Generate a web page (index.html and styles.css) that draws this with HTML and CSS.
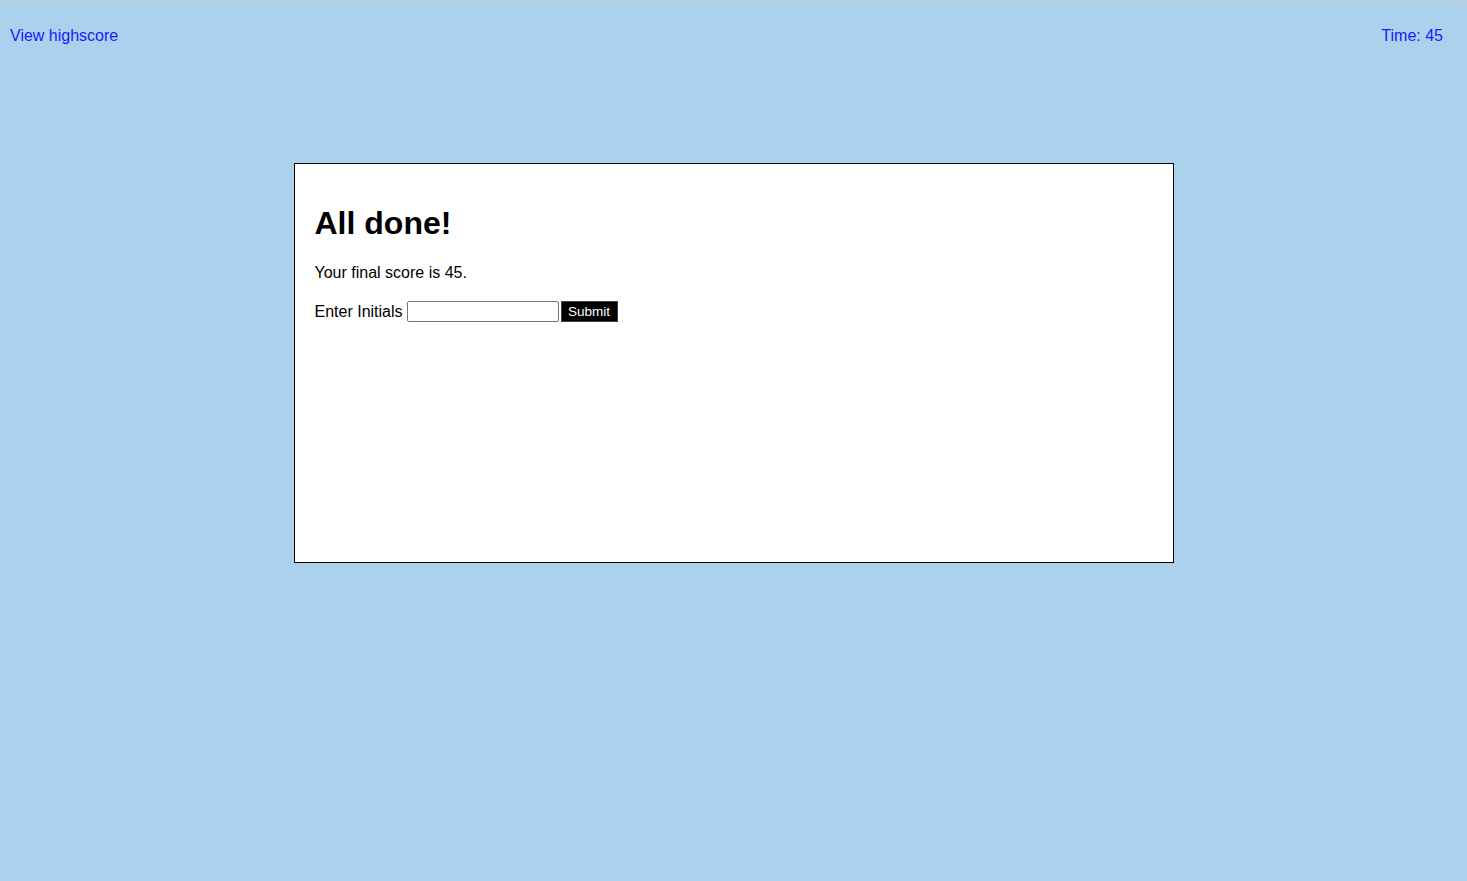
FILE: index.html
```html
<!DOCTYPE html>
<html>
<head>
<meta charset="utf-8">
<link rel="stylesheet" href="styles.css">
</head>
<body>
<header class="topbar">
  <a class="highscore" href="#">View highscore</a>
  <span class="timer">Time: 45</span>
</header>
<main class="card">
  <h1 class="title">All done!</h1>
  <p class="score">Your final score is 45.</p>
  <form class="initials">
    <label class="label" for="init">Enter Initials</label>
    <input class="input" id="init" type="text">
    <button class="submit" type="button">Submit</button>
  </form>
</main>
</body>
</html>
```
FILE: styles.css
```css
html, body {
  margin: 0;
  height: 100%;
}
body {
  background: #abd1ec;
  border-top: 1px solid #c9c9c9;
  box-sizing: border-box;
  font-family: "Liberation Sans", Arial, sans-serif;
  font-size: 16px;
  color: #000;
}
.topbar {
  display: flex;
  justify-content: space-between;
  padding: 26px 24px 0 10px;
  line-height: 18px;
  color: #1a1aff;
}
.highscore {
  color: #1a1aff;
  text-decoration: none;
}
.card {
  width: 880px;
  height: 400px;
  box-sizing: border-box;
  margin: 118px auto 0;
  background: #fff;
  border: 1px solid #000;
  padding: 20px;
}
.title {
  font-size: 32px;
  margin: 21px 0 0;
  line-height: 37px;
}
.score {
  margin: 22px 0 0;
  line-height: 18px;
}
.initials {
  display: flex;
  align-items: center;
  margin-top: 19px;
}
.label {
  margin-right: 4px;
}
.input {
  width: 152px;
  height: 21px;
  box-sizing: border-box;
  border: 1px solid #767676;
  border-radius: 2px;
  margin: 0 2px 0 0;
  padding: 0 2px;
}
.submit {
  width: 57px;
  height: 21px;
  background: #000;
  color: #fff;
  border: 1px solid #444;
  font-family: "Liberation Sans", Arial, sans-serif;
  font-size: 13.5px;
  padding: 0;
}
```
